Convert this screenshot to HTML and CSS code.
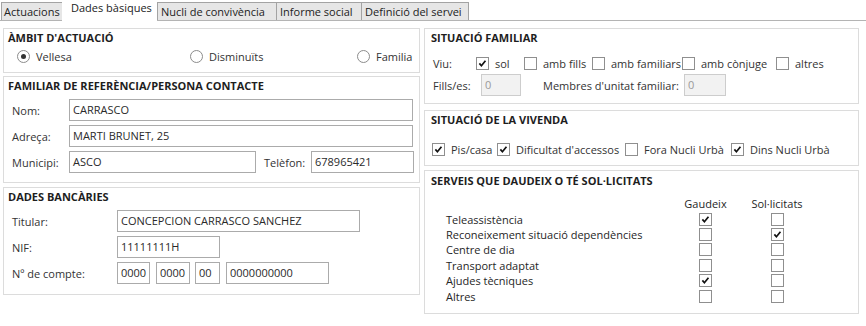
FILE: index.html
```html
<!DOCTYPE html>
<html>
	<head>
		<title>Dades bàsiques</title>
		<meta charset="utf-8">
		<link rel="stylesheet" href="styles.css">
	</head>

	<body>
		<div class="tabs">
			<div class="tab tab-actuacions">Actuacions</div>
			<div class="tab active">Dades bàsiques</div>
			<div class="tab tab-nucli">Nucli de convivència</div>
			<div class="tab tab-informe">Informe social</div>
			<div class="tab tab-servei">Definició del servei</div>
		</div>

		<div class="content">
			<div class="col col-left">

				<div class="panel panel-ambit">
					<div class="panel-title">ÀMBIT D'ACTUACIÓ</div>
					<div class="radio-row">
						<label class="opt"><span class="radio checked"></span>Vellesa</label>
						<label class="opt"><span class="radio"></span>Disminuïts</label>
						<label class="opt"><span class="radio"></span>Familia</label>
					</div>
				</div>

				<div class="panel panel-familiar">
					<div class="panel-title">FAMILIAR DE REFERÈNCIA/PERSONA CONTACTE</div>
					<div class="form-row">
						<span class="lbl lbl-short">Nom:</span>
						<span class="field w-full">CARRASCO</span>
					</div>
					<div class="form-row">
						<span class="lbl lbl-short">Adreça:</span>
						<span class="field w-full">MARTI BRUNET, 25</span>
					</div>
					<div class="form-row">
						<span class="lbl lbl-short">Municipi:</span>
						<span class="field w-municipi">ASCO</span>
						<span class="lbl lbl-tel">Telèfon:</span>
						<span class="field w-tel">678965421</span>
					</div>
				</div>

				<div class="panel panel-banc">
					<div class="panel-title">DADES BANCÀRIES</div>
					<div class="form-row">
						<span class="lbl lbl-long">Titular:</span>
						<span class="field w-titular">CONCEPCION CARRASCO SANCHEZ</span>
					</div>
					<div class="form-row">
						<span class="lbl lbl-long">NIF:</span>
						<span class="field w-nif">11111111H</span>
					</div>
					<div class="form-row">
						<span class="lbl lbl-long">Nº de compte:</span>
						<span class="field w-c1">0000</span>
						<span class="field w-c2">0000</span>
						<span class="field w-c3">00</span>
						<span class="field w-c4">0000000000</span>
					</div>
				</div>

			</div>

			<div class="col col-right">

				<div class="panel panel-situacio">
					<div class="panel-title">SITUACIÓ FAMILIAR</div>
					<div class="viu-row">
						<span class="lbl">Viu:</span>
						<label class="opt"><span class="cb checked"><svg viewBox="0 0 13 13"><path d="M2.8 6.4 L5.2 9.2 L10 3.2"/></svg></span>sol</label>
						<label class="opt"><span class="cb"></span>amb fills</label>
						<label class="opt"><span class="cb"></span>amb familiars</label>
						<label class="opt"><span class="cb"></span>amb cònjuge</label>
						<label class="opt"><span class="cb"></span>altres</label>
					</div>
					<div class="fills-row">
						<span class="lbl lbl-fills">Fills/es:</span>
						<span class="field disabled w-fills">0</span>
						<span class="lbl lbl-membres">Membres d'unitat familiar:</span>
						<span class="field disabled w-membres">0</span>
					</div>
				</div>

				<div class="panel panel-vivenda">
					<div class="panel-title">SITUACIÓ DE LA VIVENDA</div>
					<div class="vivenda-row">
						<label class="opt"><span class="cb checked"><svg viewBox="0 0 13 13"><path d="M2.8 6.4 L5.2 9.2 L10 3.2"/></svg></span>Pis/casa</label>
						<label class="opt"><span class="cb checked"><svg viewBox="0 0 13 13"><path d="M2.8 6.4 L5.2 9.2 L10 3.2"/></svg></span>Dificultat d'accessos</label>
						<label class="opt"><span class="cb"></span>Fora Nucli Urbà</label>
						<label class="opt"><span class="cb checked"><svg viewBox="0 0 13 13"><path d="M2.8 6.4 L5.2 9.2 L10 3.2"/></svg></span>Dins Nucli Urbà</label>
					</div>
				</div>

				<div class="panel panel-serveis">
					<div class="panel-title">SERVEIS QUE DAUDEIX O TÉ SOL·LICITATS</div>
					<div class="serveis-grid">
						<span></span><span class="col-head">Gaudeix</span><span></span><span class="col-head">Sol·licitats</span>

						<span>Teleassistència</span>
						<span class="cell"><span class="cb checked"><svg viewBox="0 0 13 13"><path d="M2.8 6.4 L5.2 9.2 L10 3.2"/></svg></span></span><span></span>
						<span class="cell"><span class="cb"></span></span>

						<span>Reconeixement situació dependències</span>
						<span class="cell"><span class="cb"></span></span><span></span>
						<span class="cell"><span class="cb checked"><svg viewBox="0 0 13 13"><path d="M2.8 6.4 L5.2 9.2 L10 3.2"/></svg></span></span>

						<span>Centre de dia</span>
						<span class="cell"><span class="cb"></span></span><span></span>
						<span class="cell"><span class="cb"></span></span>

						<span>Transport adaptat</span>
						<span class="cell"><span class="cb"></span></span><span></span>
						<span class="cell"><span class="cb"></span></span>

						<span>Ajudes tècniques</span>
						<span class="cell"><span class="cb checked"><svg viewBox="0 0 13 13"><path d="M2.8 6.4 L5.2 9.2 L10 3.2"/></svg></span></span><span></span>
						<span class="cell"><span class="cb"></span></span>

						<span>Altres</span>
						<span class="cell"><span class="cb"></span></span><span></span>
						<span class="cell"><span class="cb"></span></span>
					</div>
				</div>

			</div>
		</div>
	</body>
</html>
```

FILE: styles.css
```css
body {
  margin: 0px;
  background-color: #ffffff;
  font-family: 'Open Sans', 'Noto Sans', sans-serif;
  font-size: 11px;
  color: #333333;
}

/* tabs */

.tabs{
  display: flex;
  align-items: flex-end;
  height: 20px;
  padding-left: 1px;
  border-bottom: 1px solid #b4b4b4;
}

.tab{
  box-sizing: border-box;
  height: 18px;
  line-height: 17px;
  padding: 0 0 0 3px;
  background-color: #e6e6e6;
  border: 1px solid #a3a3a3;
  border-bottom: none;
  margin-right: -1px;
  color: #222222;
  white-space: nowrap;
}

.tab-actuacions{ width: 62px; padding-left: 2px; }
.tab-nucli{ width: 120px; }
.tab-informe{ width: 86px; }
.tab-servei{ width: 108px; }

.tab.active{
  width: 95px;
  height: 21px;
  line-height: 16px;
  padding: 0 0 0 9px;
  margin-right: 0;
  margin-bottom: -1px;
  background-color: #ffffff;
  border: none;
}

/* columns */

.content{
  display: flex;
  gap: 4px;
  padding: 7px 3px 0 3px;
}

.col{
  display: flex;
  flex-direction: column;
}

.col-left{
  width: 417px;
  gap: 3px;
}

.col-right{
  width: 435px;
}

.panel{
  border: 1px solid #dcdcdc;
  padding: 0 5px 0 4px;
}

.panel-title{
  height: 18px;
  line-height: 18px;
  font-weight: bold;
  color: #1e1e1e;
}

.lbl{
  white-space: nowrap;
}

.opt{
  display: flex;
  align-items: center;
  white-space: nowrap;
}

/* radios */

.panel-ambit{
  padding-bottom: 7px;
}

.radio-row{
  display: grid;
  grid-template-columns: 173px 167px 1fr;
  height: 18px;
  padding-left: 9px;
}

.radio{
  box-sizing: border-box;
  width: 13px;
  height: 13px;
  border: 1px solid #8c8c8c;
  border-radius: 50%;
  margin-right: 6px;
  position: relative;
  background-color: #ffffff;
}

.radio.checked::after{
  content: "";
  position: absolute;
  left: 3px;
  top: 3px;
  width: 5px;
  height: 5px;
  border-radius: 50%;
  background-color: #333333;
}

/* text fields */

.form-row{
  display: flex;
  align-items: center;
  margin-top: 4px;
  padding-left: 4px;
}

.panel-familiar{
  padding-bottom: 9px;
}

.panel-familiar .form-row:first-of-type{
  margin-top: 1px;
}

.panel-banc{
  margin-top: 1px;
  padding-bottom: 10px;
}

.field{
  box-sizing: border-box;
  height: 22px;
  line-height: 20px;
  border: 1px solid #ababab;
  padding: 0 0 0 3px;
  color: #2a2a2a;
  white-space: nowrap;
  overflow: hidden;
}

.field.disabled{
  background-color: #f2f2f2;
  border-color: #cdcdcd;
  color: #9a9a9a;
}

.lbl-short{ width: 57px; }
.lbl-long{ width: 105px; }
.lbl-tel{ width: 47px; margin-left: 8px; }

.w-full{ width: 344px; }
.w-municipi{ width: 187px; }
.w-tel{ width: 103px; }
.w-titular{ width: 243px; }
.w-nif{ width: 103px; }
.w-c1{ width: 33px; margin-right: 6px; }
.w-c2{ width: 34px; margin-right: 5px; }
.w-c3{ width: 25px; margin-right: 6px; }
.w-c4{ width: 103px; }

/* checkboxes */

.cb{
  box-sizing: border-box;
  display: inline-block;
  width: 13px;
  height: 13px;
  border: 1px solid #8f8f8f;
  background-color: #ffffff;
  margin-right: 6px;
  flex-shrink: 0;
}

.cb svg{
  display: block;
  width: 11px;
  height: 11px;
  margin: 0;
}

.cb svg path{
  fill: none;
  stroke: #111111;
  stroke-width: 2;
}

/* situacio familiar */

.panel-situacio{
  padding-left: 6px;
  padding-bottom: 7px;
}

.viu-row{
  display: grid;
  grid-template-columns: 43px 48px 68px 90px 94px auto;
  align-items: center;
  height: 18px;
  margin-top: 7px;
  padding-left: 2px;
}

.fills-row{
  display: flex;
  align-items: center;
  margin-top: 2px;
  padding-left: 2px;
}

.lbl-fills{ width: 48px; }
.w-fills{ width: 40px; }
.lbl-membres{ margin-left: 22px; width: 141px; }
.w-membres{ width: 42px; }

/* vivenda */

.panel-vivenda{
  margin-top: 6px;
  padding-left: 7px;
  padding-bottom: 7px;
}

.panel-vivenda .panel-title{
  margin-left: -1px;
}

.vivenda-row{
  display: grid;
  grid-template-columns: 65px 128px 106px auto;
  align-items: center;
  height: 18px;
  margin-top: 11px;
}

/* serveis */

.panel-serveis{
  margin-top: 4px;
  padding-top: 1px;
  padding-left: 6px;
  padding-bottom: 9px;
}

.serveis-grid{
  display: grid;
  grid-template-columns: 232px 55px 16px 56px;
  grid-auto-rows: 15.4px;
  align-items: center;
  margin-top: 6px;
  padding-left: 15px;
  line-height: 15px;
  color: #262626;
}

.col-head{
  text-align: center;
}

.cell{
  display: flex;
  justify-content: center;
}

.cell .cb{
  margin-right: 0;
}
```
